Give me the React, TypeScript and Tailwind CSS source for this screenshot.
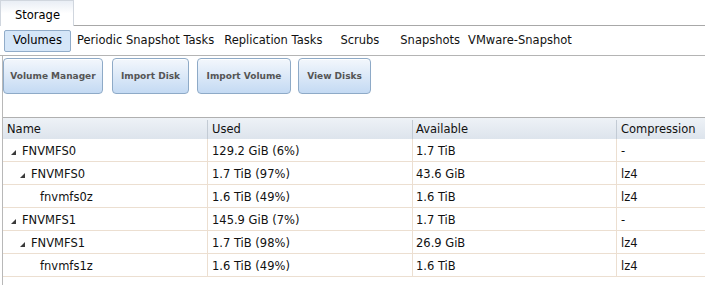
import React from "react";

const rows = [
  { level: 0, name: "FNVMFS0", used: "129.2 GiB (6%)", avail: "1.7 TiB", comp: "-", exp: true },
  { level: 1, name: "FNVMFS0", used: "1.7 TiB (97%)", avail: "43.6 GiB", comp: "lz4", exp: true },
  { level: 2, name: "fnvmfs0z", used: "1.6 TiB (49%)", avail: "1.6 TiB", comp: "lz4", exp: false },
  { level: 0, name: "FNVMFS1", used: "145.9 GiB (7%)", avail: "1.7 TiB", comp: "-", exp: true },
  { level: 1, name: "FNVMFS1", used: "1.7 TiB (98%)", avail: "26.9 GiB", comp: "lz4", exp: true },
  { level: 2, name: "fnvmfs1z", used: "1.6 TiB (49%)", avail: "1.6 TiB", comp: "lz4", exp: false },
];

function Tri() {
  return (
    <svg width="5" height="5" viewBox="0 0 5 5" className="shrink-0 mt-[2px]">
      <polygon points="5,0 5,5 0,5" fill="#3a3a3a" />
    </svg>
  );
}

function Btn({ label, w, ml }: { label: string; w: string; ml: string }) {
  return (
    <div
      className={`${w} ${ml} h-[36px] flex items-center justify-center pt-[2px] whitespace-nowrap rounded-[4px] border border-[#8eaac7] bg-gradient-to-b from-[#f3f7fc] to-[#c4daf3] text-[9px] font-bold text-[#555555] shadow-[inset_0_1px_0_#ffffff]`}
    >
      {label}
    </div>
  );
}

export default function App() {
  return (
    <div
      className="w-[705px] h-[285px] bg-white overflow-hidden text-[11.5px] text-[#111]"
      style={{ fontFamily: '"DejaVu Sans", Verdana, sans-serif' }}
    >
      {/* Tab bar */}
      <div className="flex h-[26px]">
        <div className="w-[74px] h-[26px] border-l border-r border-t border-[#d0d6de] bg-gradient-to-b from-[#e9eef5] via-white to-white pl-[14px] pt-[6px] text-[11.5px] text-black">
          Storage
        </div>
        <div className="flex-1 border-b border-[#a8a8a8]" />
      </div>
      {/* Sub nav */}
      <div className="flex items-center h-[30px] border-b border-[#b4b4b4] pl-[4px]">
        <div className="h-[22px] w-[67px] flex items-center justify-center rounded-[2px] border border-[#91acc9] bg-[#d5e6f8] text-black">
          Volumes
        </div>
        <span className="ml-[6px]">Periodic Snapshot Tasks</span>
        <span className="ml-[10px]">Replication Tasks</span>
        <span className="ml-[18px]">Scrubs</span>
        <span className="ml-[21px]">Snapshots</span>
        <span className="ml-[8px]">VMware-Snapshot</span>
      </div>
      {/* Content */}
      <div className="ml-[2px] border-l border-[#b8b8b8] h-[229px]">
        <div className="flex pt-[2px]">
          <Btn label="Volume Manager" w="w-[100px]" ml="ml-[0px]" />
          <Btn label="Import Disk" w="w-[77px]" ml="ml-[9px]" />
          <Btn label="Import Volume" w="w-[94px]" ml="ml-[8px]" />
          <Btn label="View Disks" w="w-[73px]" ml="ml-[7px]" />
        </div>
        <div className="mt-[23px]">
          {/* header */}
          <div className="flex h-[22px] pt-[2px] border-t border-[#b0b0b0] bg-gradient-to-b from-[#eef2f7] to-[#dde4ec] text-[#111]">
            <div className="w-[205px] flex items-center pl-[4px] border-r border-[#c3cbd4]">Name</div>
            <div className="w-[205px] flex items-center pl-[4px] border-r border-[#c3cbd4]">Used</div>
            <div className="w-[204px] flex items-center pl-[3px] border-r border-[#c3cbd4]">Available</div>
            <div className="flex-1 flex items-center pl-[4px]">Compression</div>
          </div>
          {rows.map((r, i) => (
            <div key={i} className="flex h-[23px] border-b border-[#ecdfd1]">
              <div
                className="w-[205px] flex items-center pt-[3px] border-r border-[#ecdfd1]"
                style={{ paddingLeft: 8 + r.level * 9 }}
              >
                {r.exp ? <Tri /> : <span className="w-[5px]" />}
                <span className="ml-[6px]">{r.name}</span>
              </div>
              <div className="w-[205px] flex items-center pt-[3px] pl-[4px] border-r border-[#ecdfd1]">{r.used}</div>
              <div className="w-[204px] flex items-center pt-[3px] pl-[3px] border-r border-[#ecdfd1]">{r.avail}</div>
              <div className="flex-1 flex items-center pt-[3px] pl-[4px]">{r.comp}</div>
            </div>
          ))}
        </div>
      </div>
    </div>
  );
}
